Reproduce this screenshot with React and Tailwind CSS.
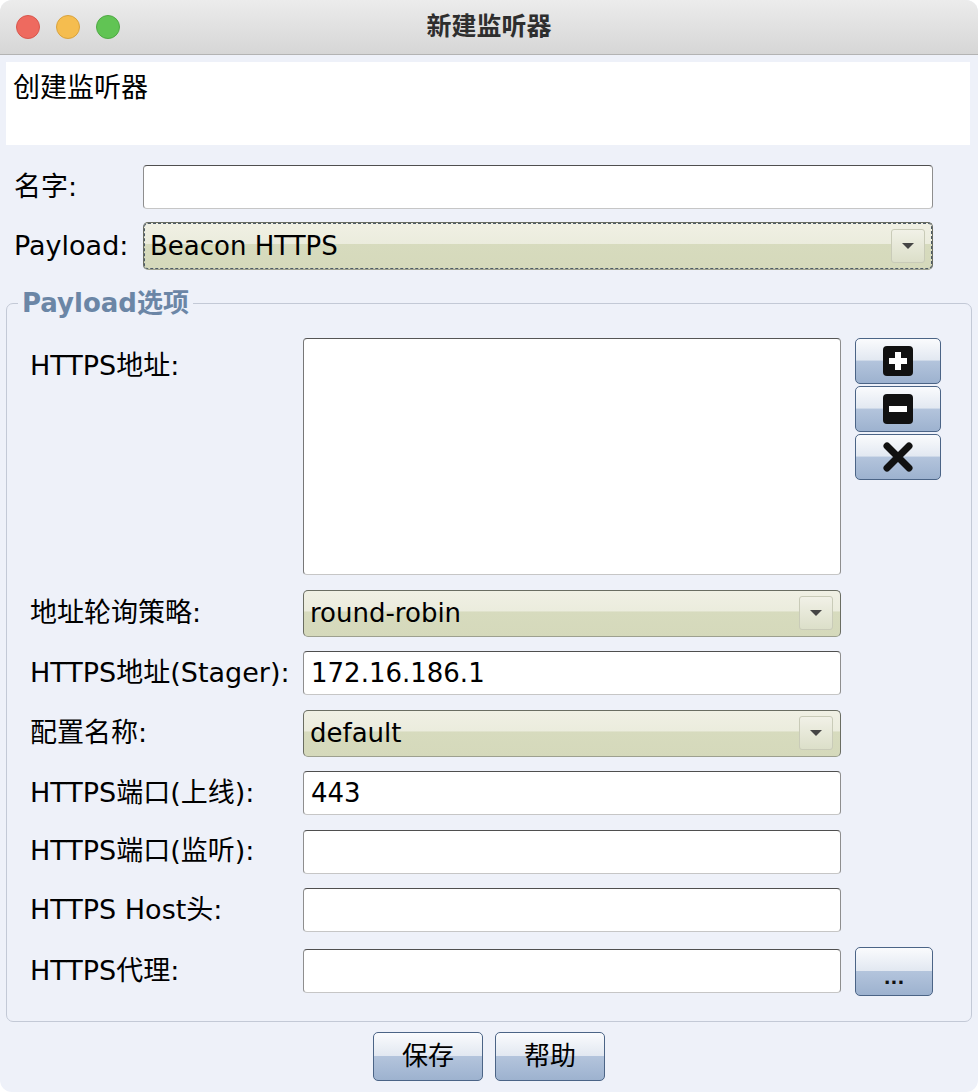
import React from 'react';

const FONT = { fontFamily: '"DejaVu Sans", "Noto Sans CJK SC", sans-serif' };

const TextBox = ({ value = '', className = '' }) => (
  <div
    className={`flex items-center h-[44px] pl-[7px] bg-white rounded-[4px] border border-[#8e8e8e] border-t-[#4f4f4f] border-b-[#c6c6c6] text-[26px] text-black ${className}`}
  >
    {value}
  </div>
);

const Arrow = () => (
  <div className="flex items-center justify-center w-[34px] h-[34px] rounded-[3px] border border-[#c9cbb8] bg-gradient-to-b from-[#f1f1e7] to-[#dcdfc9]">
    <svg width="14" height="8" viewBox="0 0 14 8">
      <path d="M1 1h12L7 7z" fill="#454545" />
    </svg>
  </div>
);

const Select = ({ value, focused = false, className = '' }) => (
  <div
    className={`relative h-[47px] rounded-[5px] border border-[#6a6d62] border-b-[#9da08f] bg-[linear-gradient(to_bottom,#f0f0e4_0%,#ebecdd_45%,#d7dbbe_46%,#d5d9bb_100%)] ${className}`}
  >
    <div
      className={`flex items-center justify-between h-full pl-[5px] pr-[6px] rounded-[4px] border ${
        focused ? 'border-dashed border-[#4d5a66]' : 'border-transparent'
      }`}
    >
      <span className="text-[26px] text-black">{value}</span>
      <Arrow />
    </div>
  </div>
);

const BlueButton = ({ children, className = '' }) => (
  <div
    className={`flex items-center justify-center rounded-[5px] border border-[#4b6486] bg-[linear-gradient(to_bottom,#fafbfd_0%,#e2e8f1_48%,#b3c4dc_50%,#9db2cf_100%)] ${className}`}
  >
    {children}
  </div>
);

const PlusIcon = () => (
  <svg width="30" height="30" viewBox="0 0 30 30">
    <rect x="0" y="0" width="30" height="30" rx="4" fill="#111" />
    <path d="M12 6h6v6h6v6h-6v6h-6v-6H6v-6h6z" fill="#fff" />
  </svg>
);

const MinusIcon = () => (
  <svg width="30" height="30" viewBox="0 0 30 30">
    <rect x="0" y="0" width="30" height="30" rx="4" fill="#111" />
    <rect x="6" y="12" width="18" height="6" fill="#fff" />
  </svg>
);

const CloseIcon = () => (
  <svg width="32" height="30" viewBox="0 0 32 30">
    <path d="M5 4l22 22M27 4L5 26" stroke="#111" strokeWidth="7" strokeLinecap="round" />
  </svg>
);

const Row = ({ label, children, extra }) => (
  <div className="grid grid-cols-[259px_538px_86px] gap-x-[14px] items-center">
    <span className="text-[27px] text-black whitespace-nowrap">{label}</span>
    {children}
    <div>{extra}</div>
  </div>
);

export default function App() {
  return (
    <div style={FONT} className="w-[978px] h-[1092px] bg-white">
      <div className="flex flex-col w-full h-full rounded-[12px] overflow-hidden bg-[#eef1f9]">
        {/* title bar */}
        <div className="relative flex items-center justify-center h-[55px] shrink-0 bg-gradient-to-b from-[#ececec] to-[#d6d6d6] border-b border-[#b3b3b3]">
          <div className="absolute left-[16px] top-[15px] flex gap-[16px]">
            <span className="w-[24px] h-[24px] rounded-full bg-[#ee6a5f] border border-[#d8574d]" />
            <span className="w-[24px] h-[24px] rounded-full bg-[#f5bd4f] border border-[#d9a33e]" />
            <span className="w-[24px] h-[24px] rounded-full bg-[#61c454] border border-[#4fa944]" />
          </div>
          <span className="text-[25px] font-bold text-[#2e2e2e]">新建监听器</span>
        </div>

        <div className="flex flex-col px-[6px] pt-[7px]">
          {/* description */}
          <div className="h-[83px] mr-[2px] bg-white pl-[7px] pt-[6px] text-[27px] text-black">
            创建监听器
          </div>

          {/* name / payload */}
          <div className="flex flex-col gap-[13px] mt-[20px] pl-[8px]">
            <div className="flex items-center">
              <span className="w-[129px] text-[27px] text-black">名字:</span>
              <TextBox className="w-[790px]" />
            </div>
            <div className="flex items-center">
              <span className="w-[129px] text-[27px] text-black">Payload:</span>
              <Select value="Beacon HTTPS" focused className="w-[790px] h-[48px]" />
            </div>
          </div>

          {/* payload options */}
          <fieldset className="mt-[15px] w-[966px] border border-[#c3c9d6] rounded-[7px] pl-[23px] pb-[25px]">
            <legend className="-ml-[12px] px-[4px] text-[26px] leading-[36px] font-bold text-[#6b86a6]">
              Payload选项
            </legend>
            <div className="flex flex-col gap-[14.5px] pt-[17px]">
              <div className="grid grid-cols-[259px_538px_86px] gap-x-[14px] items-start">
                <span className="pt-[8px] text-[27px] text-black">HTTPS地址:</span>
                <div className="h-[237px] bg-white rounded-[4px] border border-[#8e8e8e] border-t-[#555] border-l-[#777] border-b-[#c6c6c6]" />
                <div className="flex flex-col gap-[2px]">
                  <BlueButton className="h-[46px]">
                    <PlusIcon />
                  </BlueButton>
                  <BlueButton className="h-[46px]">
                    <MinusIcon />
                  </BlueButton>
                  <BlueButton className="h-[46px]">
                    <CloseIcon />
                  </BlueButton>
                </div>
              </div>
              <Row label="地址轮询策略:">
                <Select value="round-robin" />
              </Row>
              <Row label="HTTPS地址(Stager):">
                <TextBox value="172.16.186.1" />
              </Row>
              <Row label="配置名称:">
                <Select value="default" />
              </Row>
              <Row label="HTTPS端口(上线):">
                <TextBox value="443" />
              </Row>
              <Row label="HTTPS端口(监听):">
                <TextBox />
              </Row>
              <Row label="HTTPS Host头:">
                <TextBox />
              </Row>
              <Row
                label="HTTPS代理:"
                extra={
                  <BlueButton className="w-[78px] h-[49px] items-end pb-[8px]">
                    <span className="text-[18px] font-bold leading-none text-[#111]">...</span>
                  </BlueButton>
                }
              >
                <TextBox />
              </Row>
            </div>
          </fieldset>

          {/* footer buttons */}
          <div className="flex justify-center gap-[12px] mt-[10px]">
            <BlueButton className="w-[110px] h-[49px]">
              <span className="text-[26px] text-black">保存</span>
            </BlueButton>
            <BlueButton className="w-[110px] h-[49px]">
              <span className="text-[26px] text-black">帮助</span>
            </BlueButton>
          </div>
        </div>
      </div>
    </div>
  );
}
